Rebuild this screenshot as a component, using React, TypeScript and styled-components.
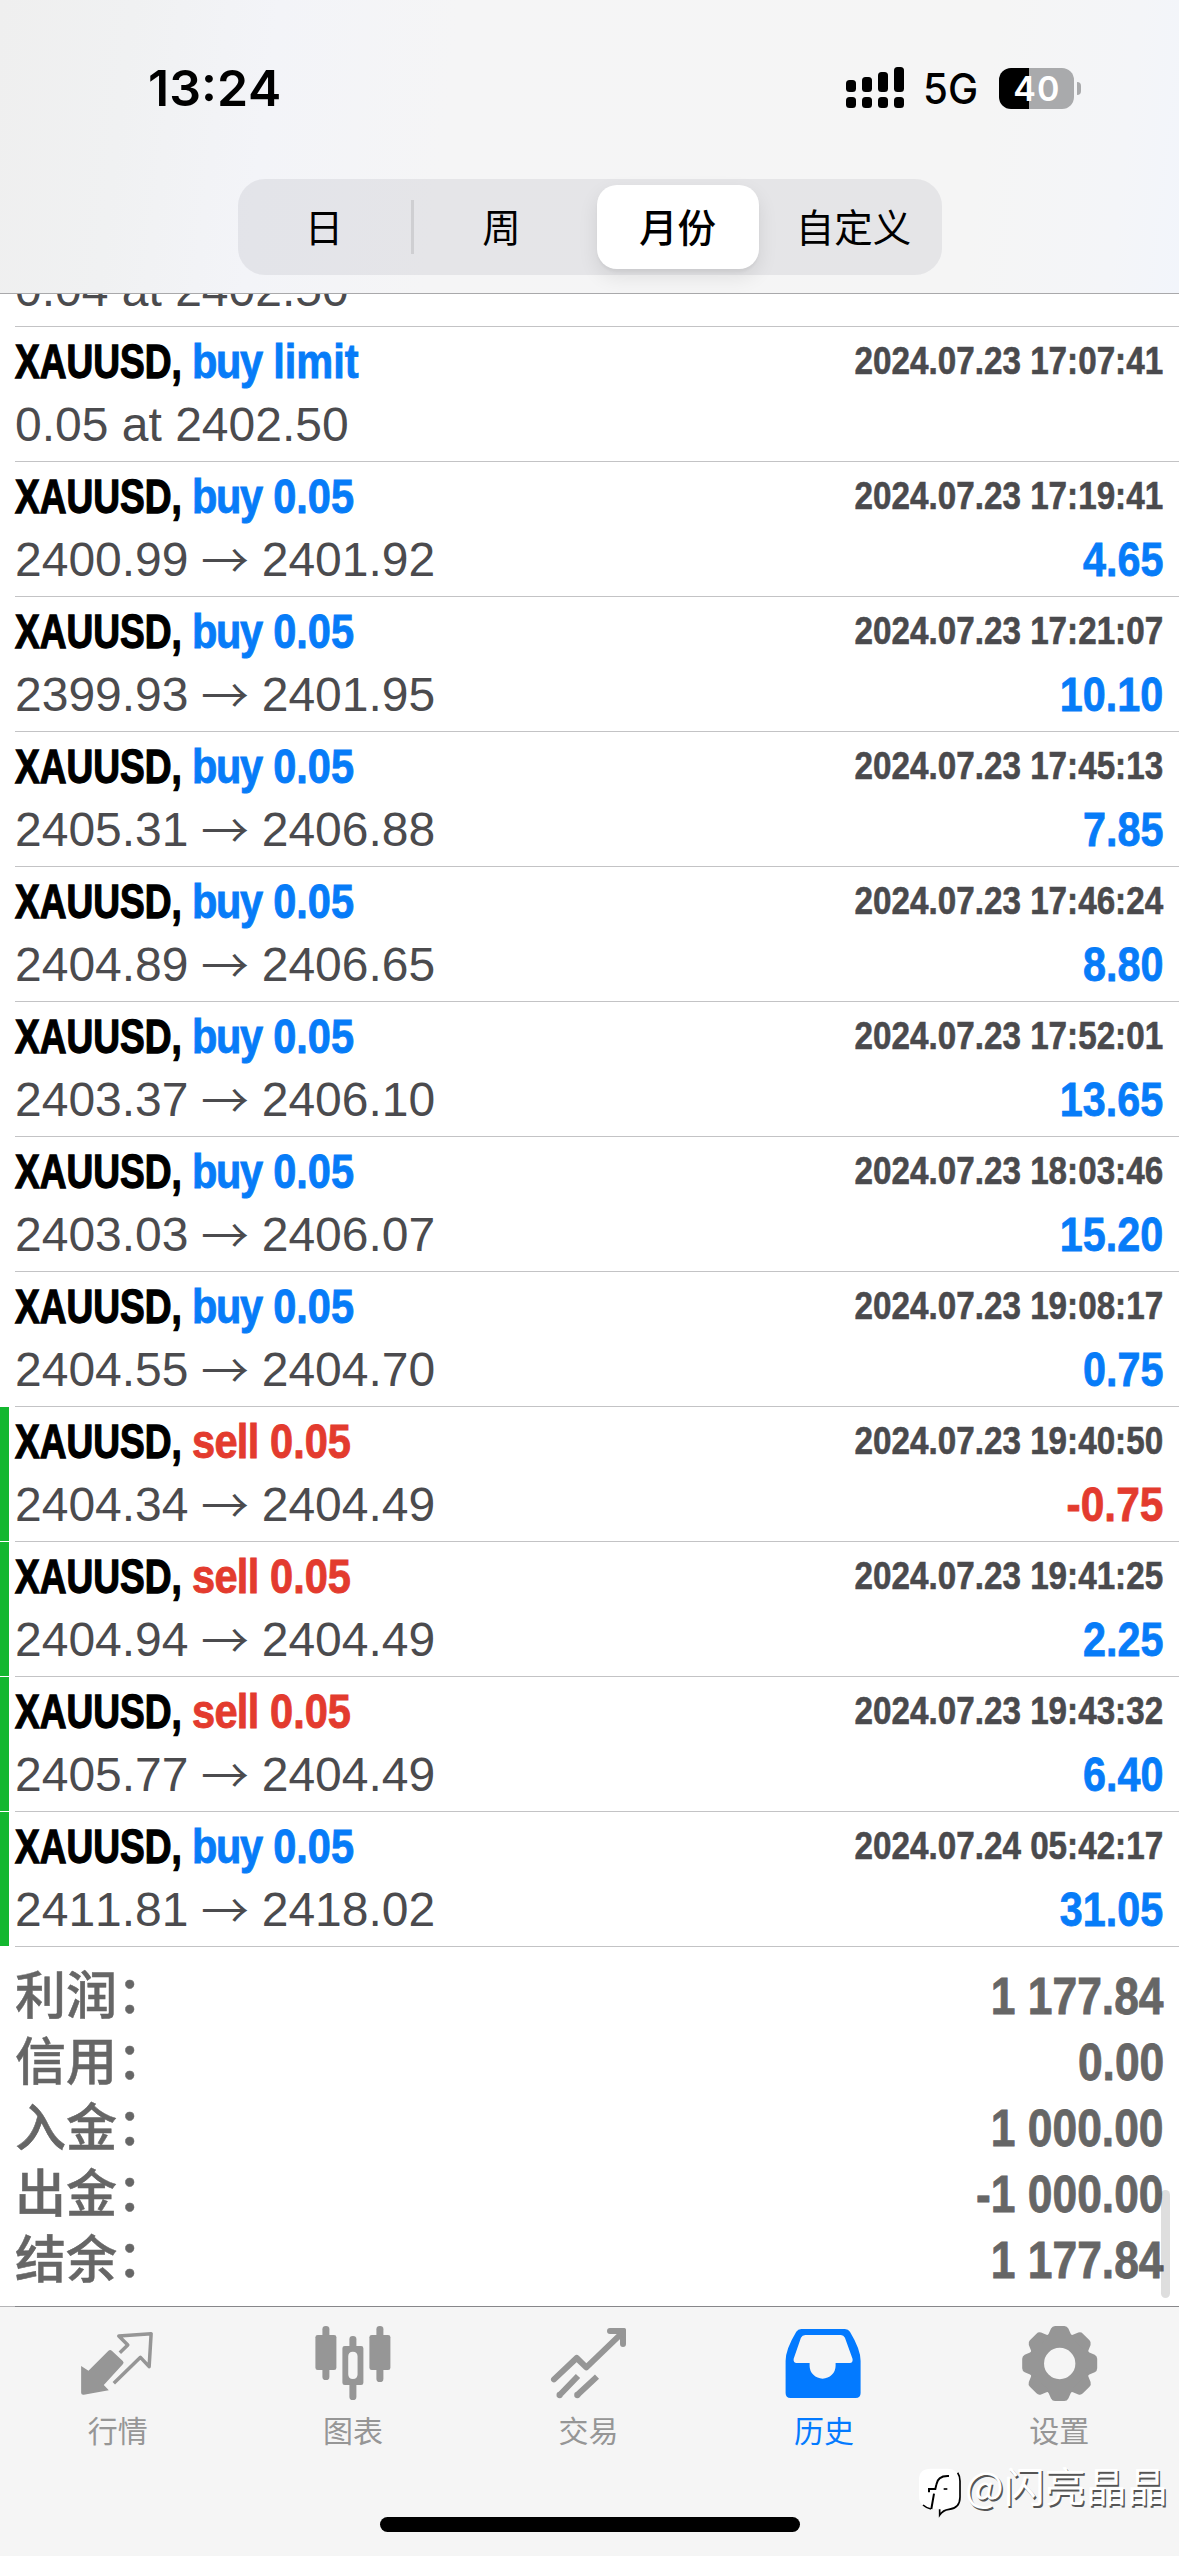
import React from 'react';
import styled, { createGlobalStyle, css } from 'styled-components';

const Global = createGlobalStyle`
  html, body { margin: 0; padding: 0; background: #fff; }
  * { box-sizing: border-box; }
`;

const HELV = `"Liberation Sans", "Noto Sans CJK SC", sans-serif`;
const SYS = `Inter, "Noto Sans CJK SC", sans-serif`;
const BLUE = '#077cf8';
const RED = '#e33b2e';

const Screen = styled.div`
  width: 1179px;
  height: 2556px;
  display: flex;
  flex-direction: column;
  overflow: hidden;
  position: relative;
  background: #fff;
  font-family: ${HELV};
  font-kerning: none;
`;

const Header = styled.header`
  height: 294px;
  flex: none;
  display: flex;
  flex-direction: column;
  border-bottom: 1px solid #a9a9ab;
  background: linear-gradient(97deg, #efefef 0%, #f0f1f2 11%, #f3f4f8 23%, #f5f5f6 38%, #f5f5f5 82%, #f4f5f8 94%, #f2f5fb 100%);
`;

const StatusBar = styled.div`
  height: 179px;
  padding: 0 98px 0 148px;
  display: flex;
  justify-content: space-between;
  align-items: flex-start;
  font-family: ${SYS};
  color: #000;
`;

const Clock = styled.div`
  margin-top: 58px;
  font-size: 49.5px;
  line-height: 60px;
  font-weight: 600;
  transform: scaleX(1.01);
  transform-origin: left;
`;

const StatusRight = styled.div`
  margin-top: 67px;
  height: 42px;
  display: flex;
  align-items: center;
`;

const Network = styled.span`
  width: 74px;
  padding-left: 19px;
  font-size: 42px;
  line-height: 42px;
  font-weight: 500;
  white-space: nowrap;
  padding-top: 2px;
  span { display: inline-block; transform: scaleX(0.96); transform-origin: left; }
`;

const Battery = styled.div`
  margin-left: 21px;
  width: 75px;
  height: 41px;
  border-radius: 12px;
  background: linear-gradient(to right, #000 30px, #a9aaac 30px);
  color: #fff;
  font-size: 34px;
  font-weight: 600;
  line-height: 42px;
  text-align: center;
  letter-spacing: 1.2px;
  padding-left: 1px;
`;

const Nub = styled.div`
  margin-left: 3px;
  width: 4px;
  height: 13px;
  border-radius: 0 5px 5px 0;
  background: #a9aaac;
`;

const Segmented = styled.nav`
  align-self: center;
  width: 704px;
  height: 96px;
  border-radius: 27px;
  background: rgba(118, 118, 128, 0.12);
  display: grid;
  grid-template-columns: repeat(4, 1fr);
  padding: 6px 0;
`;

const Segment = styled.button<{ $active?: boolean; $divided?: boolean }>`
  border: 0;
  margin: ${p => (p.$active ? '0 7px' : '0')};
  padding: 0 0 4px 0;
  background: transparent;
  font: ${p => (p.$active ? 500 : 400)} 38.5px/80px "Noto Sans CJK SC", sans-serif;
  color: #000;
  white-space: nowrap;
  ${p => p.$active && css`
    background: #fff;
    border-radius: 20px;
    box-shadow: 0 8px 20px rgba(0, 0, 0, 0.09), 0 3px 3px rgba(0, 0, 0, 0.04);
  `}
  ${p => p.$divided && css`
    background: linear-gradient(#cfcfd2, #cfcfd2) right center / 3px 54px no-repeat;
    padding-right: 3px;
  `}
`;

const List = styled.main`
  flex: none;
  height: 1653px;
  display: flex;
  flex-direction: column;
`;

const Row = styled.article<{ $closed?: boolean; $clipped?: boolean }>`
  height: ${p => (p.$clipped ? 33 : 135)}px;
  flex: none;
  overflow: hidden;
  display: flex;
  background: linear-gradient(#c3c3c5, #c3c3c5) 15px 100% / 100% 1px no-repeat;
  &::before {
    content: '';
    width: 9px;
    height: ${p => (p.$clipped ? 32 : 134)}px;
    background: ${p => (p.$closed ? '#13b72f' : 'transparent')};
  }
`;

const RowBody = styled.div`
  flex: 1;
  display: flex;
  flex-direction: column;
  justify-content: flex-end;
  padding: 0 16px 6px 6px;
`;

const Line = styled.div`
  height: 63px;
  flex: none;
  display: flex;
  line-height: 63px;
  white-space: nowrap;
`;

const Symbol = styled.strong`
  width: 177px;
  font-size: 48px;
  color: #000;
  transform: scaleX(0.772);
  transform-origin: left;
  -webkit-text-stroke: 1.3px #000;
`;

const Side = styled.strong<{ $sell?: boolean }>`
  flex: 1;
  font-size: 48px;
  color: ${p => (p.$sell ? RED : BLUE)};
  -webkit-text-stroke: 0.9px ${p => (p.$sell ? RED : BLUE)};
  transform: scaleX(0.865);
  transform-origin: left;
  span { letter-spacing: ${p => (p.$sell ? -0.8 : -1.6)}px; }
`;

const Stamp = styled.time`
  font-size: 39px;
  font-weight: 700;
  color: #4a4a4d;
  line-height: 61px;
  transform: scaleX(0.852);
  transform-origin: right;
  -webkit-text-stroke: 0.6px #4a4a4d;
`;

const Price = styled.span`
  flex: 1;
  font-size: 48px;
  color: #4b4b4e;
`;

const Arrow = styled.span`
  display: inline-block;
  width: 48px;
  height: 63px;
  line-height: 59px;
  vertical-align: top;
  margin: 0 12.7px 0 12.5px;
  text-align: center;
  font-family: "Noto Sans CJK SC", sans-serif;
  font-weight: 350;
`;

const Profit = styled.strong<{ $loss?: boolean }>`
  font-size: 48px;
  color: ${p => (p.$loss ? RED : BLUE)};
  transform: scaleX(${p => (p.$loss ? 0.885 : 0.86)});
  transform-origin: right;
  -webkit-text-stroke: 0.8px ${p => (p.$loss ? RED : BLUE)};
`;

const Summary = styled.section`
  height: 359px;
  flex: none;
  position: relative;
  padding: 17px 15px 0 15px;
`;

const Total = styled.div`
  height: 66px;
  display: flex;
  justify-content: space-between;
  line-height: 66px;
  font-size: 51px;
  color: #666;
  white-space: nowrap;
`;

const TotalLabel = styled.span`
  margin-top: -5px;
  height: 66px;
  font-family: "Noto Sans CJK SC", sans-serif;
  font-weight: 500;
  -webkit-text-stroke: 0.5px #666;
`;

const Colon = styled.span`
  display: inline-block;
  transform: translateY(-1px);
`;

const TotalValue = styled.strong`
  transform: scaleX(0.87);
  transform-origin: right;
  -webkit-text-stroke: 0.8px #666;
`;

const ScrollThumb = styled.div`
  position: absolute;
  right: 9px;
  top: 243px;
  width: 9px;
  height: 108px;
  border-radius: 5px;
  background: rgba(0, 0, 0, 0.13);
`;

const TabBar = styled.footer`
  height: 250px;
  flex: none;
  position: relative;
  display: flex;
  flex-direction: column;
  align-items: center;
  background: linear-gradient(to right, #b5b5b7 15px, #87878a 15px) top / 100% 1px no-repeat, #f5f5f5;
`;

const Tabs = styled.div`
  width: 1179px;
  height: 211px;
  padding: 20px 2px 0 0;
  display: grid;
  grid-template-columns: repeat(5, 1fr);
`;

const Tab = styled.div<{ $active?: boolean }>`
  display: flex;
  flex-direction: column;
  align-items: center;
  color: ${p => (p.$active ? '#037aff' : '#969696')};
  font: 400 30px/44px "Noto Sans CJK SC", sans-serif;
  svg { width: 75px; height: 75px; overflow: visible; display: block; margin-bottom: 6px; }
`;

const HomeIndicator = styled.div`
  width: 420px;
  height: 15px;
  border-radius: 8px;
  background: #000;
`;

const Watermark = styled.div`
  position: absolute;
  left: 919px;
  top: 152px;
  display: flex;
  align-items: center;
  height: 56px;
  color: #fff;
  font: 400 41px/52px "Noto Sans CJK SC", sans-serif;
  text-shadow: 1.5px 1.5px 0.5px #555;
  white-space: nowrap;
  svg { width: 44px; height: 50px; margin: 14px 2px 0 0; overflow: visible; }
`;

const WatermarkName = styled.span`
  height: 56px;
`;

type Deal = { side: string; volume: string; time: string; open?: string; close?: string; pending?: string; profit?: string; closed?: boolean };

const deals: Deal[] = [
  { side: 'buy', volume: 'limit', time: '2024.07.23 17:07:41', pending: '0.05 at 2402.50' },
  { side: 'buy', volume: '0.05', time: '2024.07.23 17:19:41', open: '2400.99', close: '2401.92', profit: '4.65' },
  { side: 'buy', volume: '0.05', time: '2024.07.23 17:21:07', open: '2399.93', close: '2401.95', profit: '10.10' },
  { side: 'buy', volume: '0.05', time: '2024.07.23 17:45:13', open: '2405.31', close: '2406.88', profit: '7.85' },
  { side: 'buy', volume: '0.05', time: '2024.07.23 17:46:24', open: '2404.89', close: '2406.65', profit: '8.80' },
  { side: 'buy', volume: '0.05', time: '2024.07.23 17:52:01', open: '2403.37', close: '2406.10', profit: '13.65' },
  { side: 'buy', volume: '0.05', time: '2024.07.23 18:03:46', open: '2403.03', close: '2406.07', profit: '15.20' },
  { side: 'buy', volume: '0.05', time: '2024.07.23 19:08:17', open: '2404.55', close: '2404.70', profit: '0.75' },
  { side: 'sell', volume: '0.05', time: '2024.07.23 19:40:50', open: '2404.34', close: '2404.49', profit: '-0.75', closed: true },
  { side: 'sell', volume: '0.05', time: '2024.07.23 19:41:25', open: '2404.94', close: '2404.49', profit: '2.25', closed: true },
  { side: 'sell', volume: '0.05', time: '2024.07.23 19:43:32', open: '2405.77', close: '2404.49', profit: '6.40', closed: true },
  { side: 'buy', volume: '0.05', time: '2024.07.24 05:42:17', open: '2411.81', close: '2418.02', profit: '31.05', closed: true },
];

const totals = [
  ['利润', '1 177.84'],
  ['信用', '0.00'],
  ['入金', '1 000.00'],
  ['出金', '-1 000.00'],
  ['结余', '1 177.84'],
];

const SignalIcon = () => (
  <svg width="58" height="42" viewBox="0 0 58 42">
    {[13, 10, 5, 0].map((top, i) => (
      <g key={i}>
        <rect x={i * 16} y={top} width="10" height={25 - top} rx="3.5" />
        <rect x={i * 16} y={30} width="10" height="11" rx="3.5" />
      </g>
    ))}
  </svg>
);

const QuotesIcon = () => (
  <svg viewBox="240.6 108 225 225" fill="currentColor">
    <path d="M244 228 L266 242 L326 182 Q331 178 336 182 L369 213 Q374 218 369 223 L312 285 L327 301 L252 314 Q244 315 244 308 Z" />
    <path d="M360 188 L384 165 L357 138 L454 131 L448 230 L422 202 L342 280" fill="none" stroke="currentColor" strokeWidth="10.5" strokeLinejoin="round" />
  </svg>
);

const ChartIcon = () => (
  <svg viewBox="946.8 108 225 225" fill="currentColor">
    <rect x="966" y="108" width="21" height="162" rx="10" />
    <rect x="945" y="135" width="63" height="105" rx="7" />
    <rect x="1128" y="108" width="21" height="168" rx="10" />
    <rect x="1107" y="135" width="63" height="105" rx="7" />
    <rect x="1047" y="138" width="21" height="45" rx="10" />
    <rect x="1047" y="275" width="21" height="55" rx="10" />
    <path fillRule="evenodd" d="M1033 168h49q7 0 7 7v103q0 7-7 7h-49q-7 0-7-7V175q0-7 7-7zM1057.500 185q-14 0-14 14v54q0 14 14 14t14-14v-54q0-14-14-14z" />
  </svg>
);

const TradeIcon = () => (
  <svg viewBox="333 108 225 225" fill="none" stroke="currentColor" strokeWidth="18" strokeLinejoin="round">
    <path strokeLinecap="round" d="M342 268 L410 204 L439 232 L545 130" />
    <path strokeLinecap="round" d="M510 123 H549 V162" />
    <path fill="currentColor" stroke="none" d="M520 114 H552 Q558 114 558 120 V150 Z" />
    <path d="M362 312 L414 258 M415 312 L471 260" />
    <g fill="currentColor" stroke="none"><circle cx="359" cy="315" r="9.500" /><circle cx="412" cy="315" r="9.500" /></g>
  </svg>
);

const HistoryIcon = () => (
  <svg viewBox="1039.200 108 225 225" fill="currentColor">
    <path fillRule="evenodd" d="M1085 117H1216Q1226 117 1231 125Q1263 178 1263 212V309Q1263 324 1248 324H1053Q1038 324 1038 309V212Q1038 178 1070 125Q1075 117 1085 117ZM1097 135Q1088 135 1084 143L1062 207Q1061 219 1071 219H1110V227A39 39 0 0 0 1188 227V219H1231Q1240 219 1239 207L1216 143Q1212 135 1204 135Z" />
  </svg>
);

const SettingsIcon = () => (
  <svg viewBox="485.400 108 225 225" fill="currentColor">
    <g transform="translate(598.500 220.500)">
      <circle r="70" fill="none" stroke="currentColor" strokeWidth="46" />
      {[0, 45, 90, 135, 180, 225, 270, 315].map(a => (
        <path key={a} transform={`rotate(${a})`} d="M-38 -80 L-33 -89 L-26 -105 Q-22 -112.500 -14 -112.500 H14 Q22 -112.500 26 -105 L33 -89 L38 -80 Z" />
      ))}
    </g>
  </svg>
);

const tabs = [
  { label: '行情', icon: <QuotesIcon /> },
  { label: '图表', icon: <ChartIcon /> },
  { label: '交易', icon: <TradeIcon /> },
  { label: '历史', icon: <HistoryIcon />, active: true },
  { label: '设置', icon: <SettingsIcon /> },
];

const BrandMark = () => (
  <svg viewBox="176 538 132 150">
    <path fill="#fff" d="M212 540H260Q296 540 296 575V625Q296 657 262 659Q246 662 236 676V660L214 660Q176 655 176 622V572Q176 540 212 540Z" />
    <path fill="none" stroke="#000" strokeWidth="5" d="M292 552Q299 562 299 577V625Q299 659 266 662Q248 664 238 679V662" />
    <path fill="none" stroke="#000" strokeWidth="5" d="M188 649Q198 658 212 661" />
    <path fill="none" stroke="#000" strokeWidth="6" d="M266 562Q232 560 228 588L225 601H206V611M221 615L213 661" />
    <path fill="none" stroke="#000" strokeWidth="5" d="M250 601H261" />
  </svg>
);

export default function App() {
  return (
    <Screen>
      <Global />
      <Header>
        <StatusBar>
          <Clock>13:24</Clock>
          <StatusRight>
            <SignalIcon />
            <Network><span>5G</span></Network>
            <Battery>40</Battery>
            <Nub />
          </StatusRight>
        </StatusBar>
        <Segmented>
          <Segment $divided>日</Segment>
          <Segment>周</Segment>
          <Segment $active>月份</Segment>
          <Segment>自定义</Segment>
        </Segmented>
      </Header>
      <List>
        <Row $clipped>
          <RowBody>
            <Line><Price>0.04 at 2402.50</Price></Line>
          </RowBody>
        </Row>
        {deals.map(d => (
          <Row key={d.time} $closed={d.closed}>
            <RowBody>
              <Line>
                <Symbol>XAUUSD,</Symbol>
                <Side $sell={d.side === 'sell'}><span>{d.side}</span> {d.volume}</Side>
                <Stamp>{d.time}</Stamp>
              </Line>
              <Line>
                <Price>{d.pending ?? <>{d.open}<Arrow>→</Arrow>{d.close}</>}</Price>
                {d.profit && <Profit $loss={d.profit.startsWith('-')}>{d.profit}</Profit>}
              </Line>
            </RowBody>
          </Row>
        ))}
      </List>
      <Summary>
        {totals.map(([label, value]) => (
          <Total key={label}>
            <TotalLabel>{label}<Colon>：</Colon></TotalLabel>
            <TotalValue>{value}</TotalValue>
          </Total>
        ))}
        <ScrollThumb />
      </Summary>
      <TabBar>
        <Tabs>
          {tabs.map(t => (
            <Tab key={t.label} $active={t.active}>
              {t.icon}
              {t.label}
            </Tab>
          ))}
        </Tabs>
        <HomeIndicator />
        <Watermark><BrandMark /><WatermarkName>@闪亮晶晶</WatermarkName></Watermark>
      </TabBar>
    </Screen>
  );
}
